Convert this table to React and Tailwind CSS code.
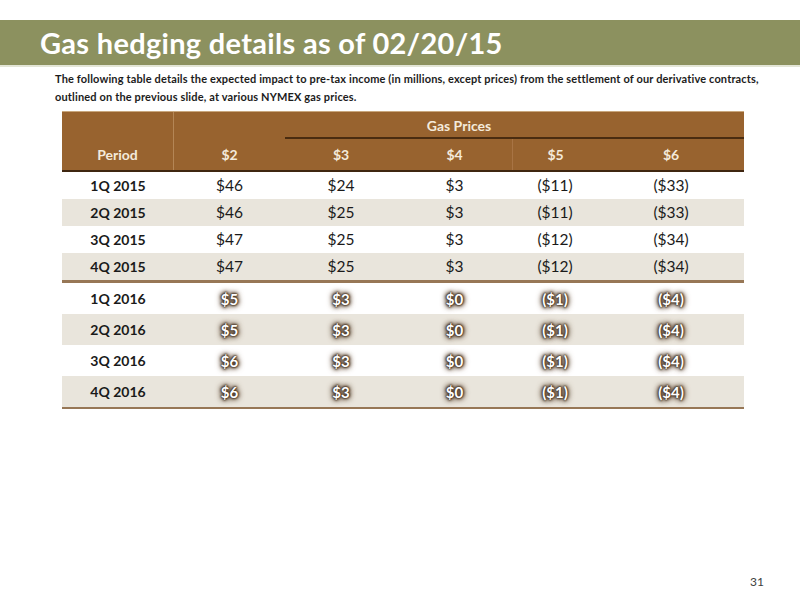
const cols = 'grid grid-cols-[112px_111px_112px_115px_86px_146px]'

const rows2015 = [
  ['1Q 2015', '$46', '$24', '$3', '($11)', '($33)'],
  ['2Q 2015', '$46', '$25', '$3', '($11)', '($33)'],
  ['3Q 2015', '$47', '$25', '$3', '($12)', '($34)'],
  ['4Q 2015', '$47', '$25', '$3', '($12)', '($34)'],
]

const rows2016 = [
  ['1Q 2016', '$5', '$3', '$0', '($1)', '($4)'],
  ['2Q 2016', '$5', '$3', '$0', '($1)', '($4)'],
  ['3Q 2016', '$6', '$3', '$0', '($1)', '($4)'],
  ['4Q 2016', '$6', '$3', '$0', '($1)', '($4)'],
]

function Row({ cells, shaded, glow, tall }) {
  return (
    <div className={`${cols} ${tall ? 'h-[31px]' : 'h-[27px]'} items-center ${shaded ? 'bg-[#e9e5dc]' : 'bg-white'}`}>
      <div className="text-center text-[14px] font-bold text-[#1a1a1a]">{cells[0]}</div>
      {cells.slice(1).map((c, i) => (
        <div key={i} className="text-center">
          {glow ? (
            <span className="text-[15px] font-bold text-white [text-shadow:0_0_1px_#463424,0_0_2px_#463424,0_0_2px_#4e3c2c,0_0_3px_#5a4735,0_0_4px_#5a4735,0_0_5px_#66523f,0_0_6px_#7a6551,0_0_7px_#8a7662]">
              {c}
            </span>
          ) : (
            <span className="text-[15.5px] text-[#1a1a1a]">{c}</span>
          )}
        </div>
      ))}
    </div>
  )
}

export default function App() {
  return (
    <div className="w-[800px] h-[600px] bg-white relative font-['Lato','Liberation_Sans',sans-serif] overflow-hidden">
      {/* ── Title bar ── */}
      <div className="mt-[20px] h-[47px] bg-[#8c915f] flex items-center pl-[40px] border-b-2 border-[#e3e5d6]">
        <h1 className="text-white font-bold text-[29px] leading-none tracking-[0.3px]">
          Gas hedging details as of 02/20/15
        </h1>
      </div>

      {/* ── Intro ── */}
      <p className="ml-[55px] mt-[3px] w-[730px] text-[11px] leading-[18px] font-bold text-[#1c1c1c] tracking-[0.15px]">
        The following table details the expected impact to pre-tax income (in millions, except prices) from the settlement of our derivative contracts,
        outlined on the previous slide, at various NYMEX gas prices.
      </p>

      {/* ── Table ── */}
      <div className="ml-[62px] mt-[5px] w-[682px]">
        <div className="bg-[#98632f] border-t border-[#c9a77d] text-[#f4eadb] text-[14px] font-bold">
          <div className={`${cols} h-[25px]`}>
            <div className="border-r border-[#b48656]" />
            <div className="col-span-5 flex items-center justify-center pt-[1px]">Gas Prices</div>
          </div>
          <div className={cols}>
            <div className="border-r border-[#b48656]" />
            <div />
            <div className="col-span-4 h-[2px] bg-[#4a2c10]" />
          </div>
          <div className={`${cols} h-[31px] items-center`}>
            <div className="h-full flex items-center justify-center border-r border-[#b48656]">Period</div>
            <div className="text-center">$2</div>
            <div className="text-center">$3</div>
            <div className="text-center">$4</div>
            <div className="h-full flex items-center justify-center border-l border-[#a87444]">$5</div>
            <div className="text-center">$6</div>
          </div>
          <div className="h-[2px] bg-[#3f2610]" />
        </div>

        {rows2015.map((r, i) => (
          <Row key={r[0]} cells={r} shaded={i % 2 === 1} />
        ))}
        <div className="h-[3px] bg-[#977756]" />
        {rows2016.map((r, i) => (
          <Row key={r[0]} cells={r} shaded={i % 2 === 1} glow tall />
        ))}
        <div className="h-[2px] bg-[#977756]" />
      </div>

      {/* ── Page number ── */}
      <div className="absolute left-[750px] top-[573px] text-[12px] text-[#404040]">31</div>
    </div>
  )
}
